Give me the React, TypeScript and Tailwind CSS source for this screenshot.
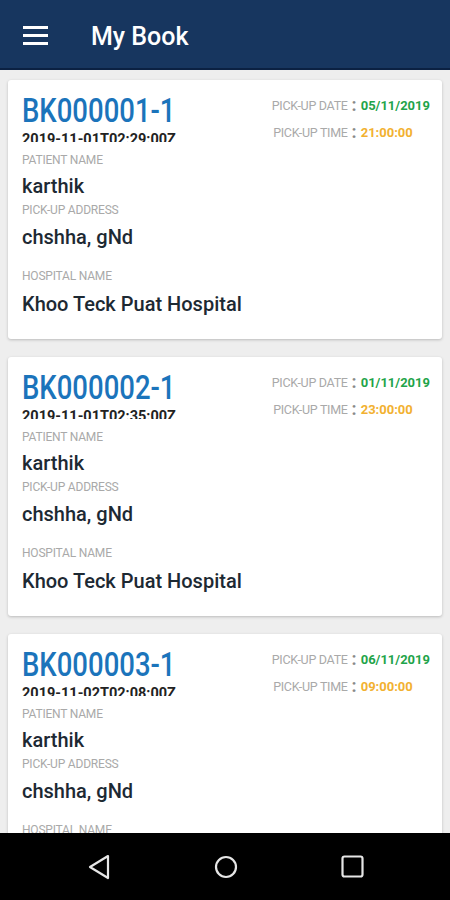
import React from 'react';

interface Booking {
  id: string;
  createdAt: string;
  patient: string;
  address: string;
  hospital: string;
  pickupDate: string;
  pickupTime: string;
}

const bookings: Booking[] = [
  {
    id: 'BK000001-1',
    createdAt: '2019-11-01T02:29:00Z',
    patient: 'karthik',
    address: 'chshha, gNd',
    hospital: 'Khoo Teck Puat Hospital',
    pickupDate: '05/11/2019',
    pickupTime: '21:00:00',
  },
  {
    id: 'BK000002-1',
    createdAt: '2019-11-01T02:35:00Z',
    patient: 'karthik',
    address: 'chshha, gNd',
    hospital: 'Khoo Teck Puat Hospital',
    pickupDate: '01/11/2019',
    pickupTime: '23:00:00',
  },
  {
    id: 'BK000003-1',
    createdAt: '2019-11-02T02:08:00Z',
    patient: 'karthik',
    address: 'chshha, gNd',
    hospital: 'Khoo Teck Puat Hospital',
    pickupDate: '06/11/2019',
    pickupTime: '09:00:00',
  },
];

const Label: React.FC<{ children: React.ReactNode; className?: string }> = ({ children, className = '' }) => (
  <div className={`text-[12px] leading-[14px] text-[#a9a9a9] tracking-[-0.2px] ${className}`}>{children}</div>
);

const Value: React.FC<{ children: React.ReactNode; className?: string }> = ({ children, className = '' }) => (
  <div className={`text-[20px] leading-[24px] font-medium text-[#1d2933] ${className}`}>{children}</div>
);

const BookingCard: React.FC<{ booking: Booking }> = ({ booking }) => (
  <div className="shrink-0 bg-white rounded-[3px] shadow-[0_1px_3px_rgba(0,0,0,0.22)] pl-[14px] pr-[12px] pt-[11px] pb-[23px]">
    <div className="flex justify-between">
      <div>
        <div className="text-[27.5px] leading-[32px] font-medium text-[#1b74bb] scale-y-[1.22] origin-top">{booking.id}</div>
        {/* created timestamp, clipped in the app */}
        <div className="mt-[10px] h-[9px] overflow-hidden">
          <div className="text-[14.5px] leading-[14px] font-bold text-[#222]">{booking.createdAt}</div>
        </div>
      </div>
      <div className="mt-[7px] grid grid-cols-[auto_auto_auto] gap-y-[11px] items-center h-fit">
        <div className="text-right text-[12.5px] leading-[16px] text-[#a9a9a9] tracking-[-0.3px]">PICK-UP DATE</div>
        <div className="pl-[4px] pr-[4px] text-[18px] leading-[16px] font-bold text-[#8a8a8a] -translate-y-[1px]">:</div>
        <div className="text-[13px] leading-[16px] font-bold text-[#1fa44a]">{booking.pickupDate}</div>
        <div className="text-right text-[12.5px] leading-[16px] text-[#a9a9a9] tracking-[-0.3px]">PICK-UP TIME</div>
        <div className="pl-[4px] pr-[4px] text-[18px] leading-[16px] font-bold text-[#8a8a8a] -translate-y-[1px]">:</div>
        <div className="text-[13px] leading-[16px] font-bold text-[#f2b130]">{booking.pickupTime}</div>
      </div>
    </div>
    <Label className="mt-[11px]">PATIENT NAME</Label>
    <Value className="mt-[7px]">{booking.patient}</Value>
    <Label className="mt-[5px]">PICK-UP ADDRESS</Label>
    <Value className="mt-[8px]">{booking.address}</Value>
    <Label className="mt-[20px]">HOSPITAL NAME</Label>
    <Value className="mt-[9px]">{booking.hospital}</Value>
  </div>
);

export default function App() {
  return (
    <div className="w-[450px] h-[900px] flex flex-col bg-[#eeeeee] overflow-hidden" style={{ fontFamily: 'Roboto, "Noto Sans", sans-serif' }}>
      <header className="h-[70px] shrink-0 bg-[#17365f] border-b-2 border-[#0b2142] flex items-center">
        <button className="ml-[23px] w-[25px] flex flex-col gap-[5px] pt-[2px]" aria-label="menu">
          <span className="block h-[3px] bg-white" />
          <span className="block h-[3px] bg-white" />
          <span className="block h-[3px] bg-white" />
        </button>
        <h1 className="ml-[43px] pt-[6px] text-[25px] font-medium text-white">My Book</h1>
      </header>

      <main className="flex-1 overflow-hidden px-[8px] pt-[10px] flex flex-col gap-[18px]">
        {bookings.map((b) => (
          <BookingCard key={b.id} booking={b} />
        ))}
      </main>

      <nav className="h-[67px] shrink-0 bg-black flex items-center justify-center gap-[103px]">
        <svg width="24" height="26" viewBox="0 0 24 26" fill="none" stroke="#e6e6e6" strokeWidth="2.2" strokeLinejoin="round">
          <path d="M21 2 L3 13 L21 24 Z" />
        </svg>
        <svg width="24" height="24" viewBox="0 0 24 24" fill="none" stroke="#e6e6e6" strokeWidth="2.2">
          <circle cx="12" cy="12" r="10" />
        </svg>
        <svg width="23" height="23" viewBox="0 0 23 23" fill="none" stroke="#e6e6e6" strokeWidth="2.2">
          <rect x="1.5" y="1.5" width="20" height="20" rx="2" />
        </svg>
      </nav>
    </div>
  );
}
